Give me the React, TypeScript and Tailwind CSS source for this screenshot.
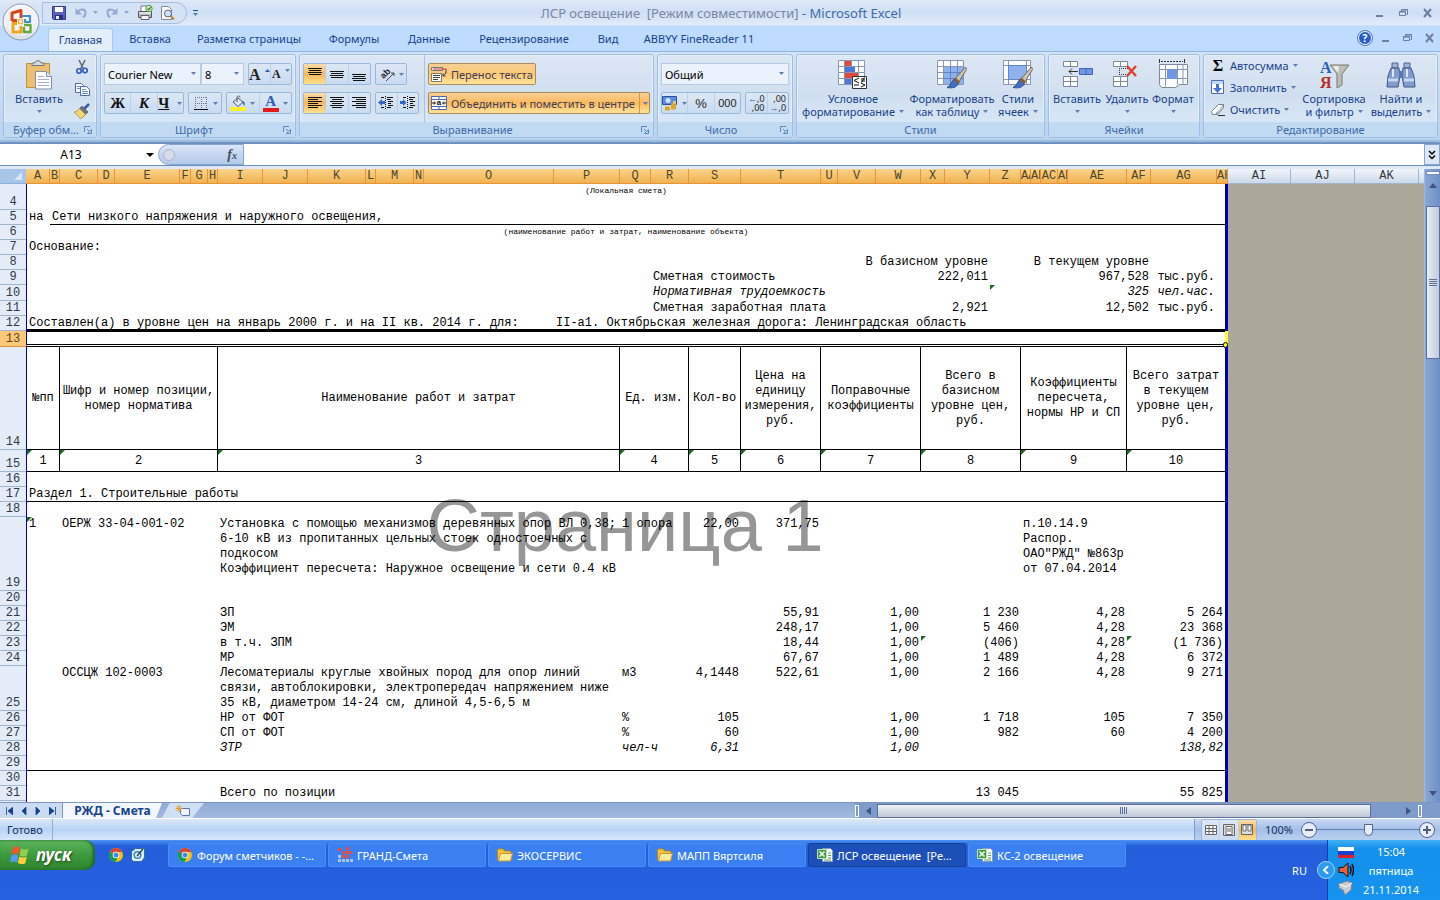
import React from "react";

type Cell = { from: string; to?: string; text?: string; cls?: string; mark?: boolean };
type Row = { n: number; h: string; cls?: string; active?: boolean; middle?: boolean; cells?: Cell[] };

const columns: [string, string][] = [
  ["A", "w-[24px]"], ["B", "w-[10px]"], ["C", "w-[38px]"], ["D", "w-[17px]"], ["E", "w-[65px]"],
  ["F", "w-[11px]"], ["G", "w-[17px]"], ["H", "w-[10px]"], ["I", "w-[45px]"], ["J", "w-[45px]"],
  ["K", "w-[58px]"], ["L", "w-[10px]"], ["M", "w-[38px]"], ["N", "w-[10px]"], ["O", "w-[130px]"],
  ["P", "w-[66px]"], ["Q", "w-[31px]"], ["R", "w-[38px]"], ["S", "w-[52px]"], ["T", "w-[80px]"],
  ["U", "w-[17px]"], ["V", "w-[38px]"], ["W", "w-[45px]"], ["X", "w-[24px]"], ["Y", "w-[45px]"],
  ["Z", "w-[31px]"], ["AA", "w-[10px]"], ["AB", "w-[10px]"], ["AC", "w-[17px]"], ["AD", "w-[10px]"],
  ["AE", "w-[59px]"], ["AF", "w-[24px]"], ["AG", "w-[66px]"], ["AH", "w-[11px]"],
  ["AI", "w-[63px]"], ["AJ", "w-[64px]"], ["AK", "w-[64px]"],
];
const LAST = 33;
const colIndex = (name: string) => columns.findIndex((c) => c[0] === name);

const lineBottom = "shadow-[inset_0_-1px_#000]";

const groups: [string, string][] = [
  ["A", "B"], ["C", "H"], ["I", "P"], ["Q", "R"], ["S", "S"],
  ["T", "T"], ["U", "W"], ["X", "Z"], ["AA", "AE"], ["AF", "AH"],
];
const headCell = (to: string) => `text-center shadow-[inset_0_-1px_#000] ${to === "AH" ? "" : "border-r border-r-black"}`;
const headings = [
  "№пп",
  "Шифр и номер позиции,\nномер норматива",
  "Наименование работ и затрат",
  "Ед. изм.",
  "Кол-во",
  "Цена на\nединицу\nизмерения,\nруб.",
  "Поправочные\nкоэффициенты",
  "Всего в\nбазисном\nуровне цен,\nруб.",
  "Коэффициенты\nпересчета,\nнормы НР и СП",
  "Всего затрат\nв текущем\nуровне цен,\nруб.",
];

// name, unit, quantity, price, factor, base total, index, current total
const costRow = (n: number, v: string[], extra: Partial<Row> = {}, code = "", marks = false): Row => ({
  n,
  h: "h-[15px]",
  ...extra,
  cells: [
    { from: "C", to: "H", text: code },
    { from: "I", to: "P", text: v[0] },
    { from: "Q", to: "R", text: v[1] },
    { from: "S", text: v[2], cls: "text-right" },
    { from: "T", text: v[3], cls: "text-right" },
    { from: "U", to: "W", text: v[4], cls: "text-right" },
    { from: "X", to: "Z", text: v[5], cls: "text-right", mark: marks },
    { from: "AA", to: "AE", text: v[6], cls: "text-right" },
    { from: "AF", to: "AH", text: v[7], cls: "text-right", mark: marks },
  ],
});

const rows: Row[] = [
  { n: 4, h: "h-[26px]", cells: [{ from: "A", to: "AH", text: "(Локальная смета)", cls: "text-center text-[8px] leading-[13px]" }] },
  {
    n: 5, h: "h-[15px]",
    cells: [{ from: "A", text: "на" }, { from: "B", to: "AH", text: "Сети низкого напряжения и наружного освещения,", cls: lineBottom }],
  },
  { n: 6, h: "h-[15px]", cells: [{ from: "A", to: "AH", text: "(наименование работ и затрат, наименование объекта)", cls: "text-center text-[8px] leading-[13px]" }] },
  { n: 7, h: "h-[15px]", cells: [{ from: "A", to: "H", text: "Основание:" }] },
  {
    n: 8, h: "h-[15px]",
    cells: [
      { from: "U", to: "Y", text: "В базисном уровне", cls: "text-right" },
      { from: "Z", to: "AF", text: "В текущем уровне", cls: "text-right" },
    ],
  },
  {
    n: 9, h: "h-[15px]",
    cells: [
      { from: "R", to: "V", text: "Сметная стоимость" },
      { from: "W", to: "Y", text: "222,011", cls: "text-right" },
      { from: "AC", to: "AF", text: "967,528", cls: "text-right" },
      { from: "AG", text: "тыс.руб.", cls: "text-right" },
    ],
  },
  {
    n: 10, h: "h-[16px]", cls: "italic",
    cells: [
      { from: "R", to: "V", text: "Нормативная трудоемкость" },
      { from: "Z", mark: true },
      { from: "AC", to: "AF", text: "325", cls: "text-right" },
      { from: "AG", text: "чел.час.", cls: "text-right" },
    ],
  },
  {
    n: 11, h: "h-[15px]",
    cells: [
      { from: "R", to: "V", text: "Сметная заработная плата" },
      { from: "W", to: "Y", text: "2,921", cls: "text-right" },
      { from: "AC", to: "AF", text: "12,502", cls: "text-right" },
      { from: "AG", text: "тыс.руб.", cls: "text-right" },
    ],
  },
  {
    n: 12, h: "h-[15px]", cls: "shadow-[inset_0_-2px_#000]",
    cells: [
      { from: "A", to: "O", text: "Составлен(а) в уровне цен на январь 2000 г. и на II кв. 2014 г. для:" },
      { from: "P", to: "AH", text: "II-а1. Октябрьская железная дорога: Ленинградская область" },
    ],
  },
  { n: 13, h: "h-[16px]", cls: "border-b-[3px] border-double border-b-black shadow-[inset_0_1px_#000]", active: true },
  { n: 14, h: "h-[103px]", middle: true, cells: groups.map(([from, to], i) => ({ from, to, text: headings[i], cls: headCell(to) })) },
  { n: 15, h: "h-[22px]", middle: true, cells: groups.map(([from, to], i) => ({ from, to, text: String(i + 1), cls: headCell(to), mark: true })) },
  { n: 16, h: "h-[15px]" },
  { n: 17, h: "h-[15px]", cls: lineBottom, cells: [{ from: "A", to: "O", text: "Раздел 1. Строительные работы" }] },
  { n: 18, h: "h-[15px]" },
  {
    n: 19, h: "h-[74px]",
    cells: [
      { from: "A", text: "1", mark: true },
      { from: "C", to: "H", text: "ОЕРЖ 33-04-001-02" },
      {
        from: "I", to: "P",
        text: "Установка с помощью механизмов деревянных опор ВЛ 0,38;\n6-10 кВ из пропитанных цельных стоек одностоечных с\nподкосом\nКоэффициент пересчета: Наружное освещение и сети 0.4 кВ",
      },
      { from: "Q", to: "R", text: "1 опора" },
      { from: "S", text: "22,00", cls: "text-right" },
      { from: "T", text: "371,75", cls: "text-right" },
      { from: "AA", to: "AE", text: "п.10.14.9\nРаспор.\nОАО\"РЖД\" №863р\nот 07.04.2014" },
    ],
  },
  { n: 20, h: "h-[15px]" },
  costRow(21, ["ЗП", "", "", "55,91", "1,00", "1 230", "4,28", "5 264"]),
  costRow(22, ["ЭМ", "", "", "248,17", "1,00", "5 460", "4,28", "23 368"]),
  costRow(23, ["в т.ч. ЗПМ", "", "", "18,44", "1,00", "(406)", "4,28", "(1 736)"], {}, "", true),
  costRow(24, ["МР", "", "", "67,67", "1,00", "1 489", "4,28", "6 372"]),
  costRow(
    25,
    [
      "Лесоматериалы круглые хвойных пород для опор линий\nсвязи, автоблокировки, электропередач напряжением ниже\n35 кВ, диаметром 14-24 см, длиной 4,5-6,5 м",
      "м3", "4,1448", "522,61", "1,00", "2 166", "4,28", "9 271",
    ],
    { h: "h-[45px]" },
    "ОССЦЖ 102-0003"
  ),
  costRow(26, ["НР от ФОТ", "%", "105", "", "1,00", "1 718", "105", "7 350"]),
  costRow(27, ["СП от ФОТ", "%", "60", "", "1,00", "982", "60", "4 200"]),
  costRow(28, ["ЗТР", "чел-ч", "6,31", "", "1,00", "", "", "138,82"], { cls: "italic" }),
  { n: 29, h: "h-[15px]", cls: lineBottom },
  { n: 30, h: "h-[15px]" },
  costRow(31, ["Всего по позиции", "", "", "", "", "13 045", "", "55 825"]),
  { n: 32, h: "h-[15px]" },
];

const SheetRow = ({ row }: { row: Row }) => {
  const cells: (Cell & { start: number; end: number })[] = [];
  let next = 0;
  (row.cells || []).forEach((c) => {
    const start = colIndex(c.from);
    const end = colIndex(c.to || c.from);
    if (start > next) cells.push({ from: "", start: next, end: start - 1 });
    cells.push({ ...c, start, end });
    next = end + 1;
  });
  if (next <= LAST) cells.push({ from: "", start: next, end: LAST });

  return (
    <tr className={row.h}>
      <th
        scope="row"
        className={`border-b p-0 text-center align-bottom font-normal leading-[14px] ${
          row.active ? "border-[#e8923c] bg-[#fbc877] text-[#5a4520]" : "border-[#9eb6ce] bg-[#e4ecf7] text-[#303844]"
        }`}
      >
        {row.n}
      </th>
      {cells.map((c) => (
        <td
          key={c.start}
          colSpan={c.end - c.start + 1}
          className={`relative whitespace-pre px-0.5 py-0 ${row.middle ? "align-middle" : "align-top"} ${row.cls || ""} ${c.cls || ""} ${
            c.start === 0 ? "border-l border-l-[#0000b8]" : ""
          } ${c.end === LAST ? "border-r-[3px] border-r-[#0000b8]" : ""}`}
        >
          {c.text}
          {c.mark && <span className="absolute left-0 top-0 h-[5px] w-[5px] bg-[#1c6b24] [clip-path:polygon(0_0,100%_0,0_100%)]" />}
          {row.active && (
            <>
              <span className="absolute -right-[3px] top-0 h-[13px] w-[3px] bg-[#ffff2e]" />
              <span className="absolute -right-[3px] top-[11px] h-[6px] w-[5px] rounded-full border border-black bg-[#ffff2e]" />
            </>
          )}
        </td>
      ))}
      <td colSpan={4} className="bg-[#aca899] p-0" />
    </tr>
  );
};

const Down = ({ className = "" }: { className?: string }) => (
  <svg viewBox="0 0 5 3" className={`h-[3px] w-[5px] shrink-0 ${className}`}>
    <path d="M0 0h5L2.5 3z" fill="#5d7fb0" />
  </svg>
);

/* ---------- icons ---------- */

const Svg = ({ s = 16, children }: { s?: number; children: React.ReactNode }) => (
  <svg viewBox={`0 0 ${s} ${s}`} width={s} height={s} className="shrink-0" fill="none">
    {children}
  </svg>
);

const OfficeLogo = () => (
  <svg viewBox="0 0 38 38" className="h-[38px] w-[38px]" fill="none">
    <defs>
      <radialGradient id="orb" cx=".5" cy=".4" r=".65">
        <stop offset="0" stopColor="#ffffff" />
        <stop offset=".7" stopColor="#eceff4" />
        <stop offset="1" stopColor="#a9b4c6" />
      </radialGradient>
    </defs>
    <circle cx="19" cy="19" r="18" fill="url(#orb)" stroke="#8b9ab4" />
    <circle cx="19" cy="19" r="16.5" stroke="#fff" strokeOpacity=".7" />
    <g strokeWidth="3" strokeLinejoin="round">
      <path d="M10 18v-8l9-2.500V15M10 17.500h5" stroke="#d9481c" />
      <path d="M21 14v-1h7v6h-5v-3" stroke="#3f8fd8" strokeWidth="2.200" />
      <path d="M15 20.500h-4V29h8v-6" stroke="#f0a51c" />
      <path d="M22 22h6.500v7H22v-5" stroke="#66a83a" strokeWidth="2.400" />
    </g>
    <path d="M16.500 16.500h4v4h-4z" stroke="#f2b64a" strokeWidth="1.500" />
  </svg>
);

const Save = () => (
  <Svg>
    <path d="M1.5 1.5h13v13h-12l-1-1z" fill="#5a5fc4" stroke="#33388f" />
    <path d="M4 2h8v5H4z" fill="#fff" />
    <path d="M4 10h8v4H4z" fill="#2b2f74" />
    <path d="M5 11h3v3H5z" fill="#e8eaff" />
  </Svg>
);
const Undo = ({ flip = false }: { flip?: boolean }) => (
  <svg viewBox="0 0 16 16" className={`h-4 w-4 shrink-0 ${flip ? "-scale-x-100" : ""}`} fill="none">
    <path d="M4.500 7C8 3 13 4 12.500 8.500c-.3 2-1.500 3-2.500 4" stroke="#93abd3" strokeWidth="2" />
    <path d="M2.500 3v6.500H9z" fill="#93abd3" />
  </svg>
);
const Printer = () => (
  <Svg>
    <path d="M4 1h7v6H4z" fill="#fff" stroke="#777" />
    <path d="M1.500 6.500h13v6h-13z" fill="#b4bac2" stroke="#555" />
    <path d="M2 7h12v2H2z" fill="#dfe3e7" />
    <path d="M4 10.500h8v4H4z" fill="#f4f4f4" stroke="#666" />
    <circle cx="12" cy="3.500" r="3.200" fill="#dff0d8" stroke="#4f9a42" />
    <path d="M10.500 3.500l1.200 1.300L14 2" stroke="#2f8a22" strokeWidth="1.300" />
  </Svg>
);
const Preview = () => (
  <Svg>
    <path d="M2.500 1.500h7l3 3v10h-10z" fill="#fff" stroke="#7a86a0" />
    <circle cx="9" cy="8.500" r="3.500" fill="#cfe6fa" stroke="#55606f" />
    <path d="M11.500 11l3.500 3.500" stroke="#b8863b" strokeWidth="2" />
  </Svg>
);
const Paste = () => (
  <svg viewBox="0 0 28 30" className="h-[30px] w-[28px]" fill="none">
    <path d="M1.500 3.500h23v24h-23z" fill="#ecc070" stroke="#c1913f" />
    <path d="M7 5.500V3h3c0-3 6-3 6 0h3v2.500z" fill="#d7dade" stroke="#70767e" />
    <path d="M10.500 11.500h11l5 5v12.500h-16z" fill="#fff" stroke="#7f8fae" />
    <path d="M21.500 11.500v5h5" fill="#dfe8f6" stroke="#7f8fae" />
    <path d="M13 16.500h6M13 19.500h11M13 22.500h11M13 25.500h11" stroke="#9db0d0" />
  </svg>
);
const Cut = () => (
  <Svg>
    <path d="M5 1l4.500 9M11 1L6.500 10" stroke="#58677f" strokeWidth="1.500" />
    <circle cx="5" cy="12" r="2.200" stroke="#2d5bb8" strokeWidth="1.600" />
    <circle cx="11" cy="11.500" r="2.200" stroke="#2d5bb8" strokeWidth="1.600" />
  </Svg>
);
const Copy = () => (
  <Svg>
    <path d="M1.500 2.500h6l2 2v7h-8z" fill="#fff" stroke="#4b6fae" />
    <path d="M3 5.500h4M3 7.500h5" stroke="#6f90cc" />
    <path d="M6.500 5.500h6l3 3v6h-9z" fill="#fff" stroke="#4b6fae" />
    <path d="M8 8.500h4M8 10.500h6M8 12.500h6" stroke="#6f90cc" />
  </Svg>
);
const Brush = () => (
  <Svg>
    <path d="M15 1l-5 5" stroke="#3b5a9a" strokeWidth="2.500" />
    <path d="M8 3l6 6-2.500 2.500-6-6z" fill="#6b7586" stroke="#4b5464" strokeWidth=".7" />
    <path d="M5.500 5.500l6 6c-1.500 2-4 3.500-5 4.500-1-2-3-4-6.500-7 1.500 0 4-1 5.500-3.500z" fill="#f0d777" stroke="#a88a2c" strokeWidth=".8" />
  </Svg>
);
const Borders = () => (
  <Svg>
    <path d="M2 2.500h12M2 8.500h12M2.500 2v12M8.500 2v12M13.500 2v12" stroke="#6b7687" strokeDasharray="1 1" />
    <path d="M1 14.500h14" stroke="#111" strokeWidth="1" />
  </Svg>
);
const Bucket = () => (
  <Svg>
    <path d="M3 7l5-4 5 4-5 4.500z" fill="#dfe6ee" stroke="#4c5c74" />
    <path d="M7 7V2.500c0-2 3-2 3 0" stroke="#4c5c74" />
    <path d="M13 6c2 1 2 3 1.500 5-1-1-2-3-2.500-4z" fill="#2f6fc8" />
    <path d="M0 12h16v4H0z" fill="#f7f02a" />
  </Svg>
);
const Lines = ({ kind }: { kind: string }) => {
  const map: Record<string, string> = {
    top: "M2 3.500h14M3 5.500h12M2 7.500h14M3 9.500h12",
    middle: "M2 6.500h14M3 8.500h12M2 10.500h14M3 12.500h12",
    bottom: "M2 9.500h14M3 11.500h12M2 13.500h14M3 15.500h12",
    left: "M2 3.500h14M2 5.500h10M2 7.500h14M2 9.500h10M2 11.500h14M2 13.500h10",
    center: "M2 3.500h14M4 5.500h10M2 7.500h14M4 9.500h10M2 11.500h14M4 13.500h10",
    right: "M2 3.500h14M6 5.500h10M2 7.500h14M6 9.500h10M2 11.500h14M6 13.500h10",
  };
  return (
    <Svg s={18}>
      <path d={map[kind]} stroke="#111" />
    </Svg>
  );
};
const Indent = ({ right = false }: { right?: boolean }) => (
  <Svg>
    <path d="M7.500 1v14" stroke="#111" strokeDasharray="1 1" />
    <path d="M3 2.500h3M9 2.500h6M9 4.500h4M10 6.500h5M10 8.500h3M10 10.500h5M3 12.500h3M9 12.500h4" stroke="#111" />
    <path d={right ? "M0 6h3V4l3.500 3.500L3 11V9H0z" : "M7 6H4V4L0 7.500 4 11V9h3z"} fill="#3568c0" />
  </Svg>
);
const WrapIcon = () => (
  <Svg>
    <path d="M.5 1.500h11v3H.5z" fill="#fff" stroke="#777" />
    <path d="M2 3h13" stroke="#c33" />
    <path d="M.5 7.500h10v8H.5z" fill="#fff" stroke="#777" />
    <path d="M2 9.500h7M2 11.500h7M2 13.500h5" stroke="#444" />
    <path d="M15 3v4l-3 3M12 7.500V10h2.500" stroke="#345" />
  </Svg>
);
const MergeIcon = () => (
  <Svg>
    <path d="M.5 1.500h15v13H.5zM.5 4.500h15M.5 11.500h15M8 1.500v3M8 11.500v3" fill="#fff" stroke="#4a69a8" />
    <path d="M1 8h3M3 6.500L4.500 8 3 9.500M15 8h-3M13 6.500L11.500 8 13 9.500" stroke="#111" />
    <text x="8" y="10" fontSize="8" fontWeight="bold" fill="#111" textAnchor="middle" fontFamily="Liberation Sans, sans-serif">a</text>
  </Svg>
);
const Money = () => (
  <Svg>
    <path d="M.5 1.500h14v8H.5z" fill="#5d8be0" stroke="#2b4f9a" />
    <ellipse cx="6" cy="5.500" rx="2.500" ry="2.500" fill="#cfe0fa" />
    <path d="M9 9.500h5M9 11.500h5M9 13.500h5M3 12.500h5M3 14.500h5" stroke="#d9a52c" strokeWidth="2" />
    <path d="M11 6h3v3h-3z" fill="#eac55e" />
  </Svg>
);
const grid = (
  <>
    <path d="M1.500 1.500h26v24h-26z" fill="#fff" stroke="#8796b3" />
    <path d="M1.500 7.500h26M1.500 13.500h26M1.500 19.500h26M7.500 1.500v24M14.500 1.500v24M21.500 1.500v24" stroke="#8796b3" />
  </>
);
const PaintBrush = () => (
  <>
    <path d="M29.500 8L19 20l3.500 3.500 8-13z" fill="#c9c4b6" stroke="#6d6a62" />
    <path d="M18 20l4.500 4.500c-2 4-6 5-11.500 4 4-2 4-5 7-8.500z" fill="#3f6fc4" stroke="#2d4f94" />
    <path d="M18.500 19.500l4.500 4.500" stroke="#8a5a2c" strokeWidth="3" />
  </>
);
const CondIcon = () => (
  <Svg s={32}>
    {grid}
    <path d="M8 2h6v5H8zM8 14h13v5H8z" fill="#e5483a" />
    <path d="M8 8h10v5H8zM8 20h6v5H8z" fill="#4a78d8" />
    <path d="M15.500 17.500h14v12h-14z" fill="#fff" stroke="#333" />
    <path d="M22 19l-5 2.500 5 2.500M17 26h5M24 20h4M24 22h4M27.500 18.500l-3 5M24 24l4 2-4 2" stroke="#111" />
  </Svg>
);
const TableIcon = () => (
  <Svg s={32}>
    {grid}
    <path d="M8 8h19v17H8z" fill="#8fb2ee" />
    <path d="M7.500 13.500h20M7.500 19.500h20M14.500 7.500v18M21.500 7.500v18" stroke="#5c83cc" />
    <PaintBrush />
  </Svg>
);
const StylesIcon = () => (
  <Svg s={32}>
    <path d="M1.500 1.500h27v24h-27zM1.500 6.500h27M1.500 20.500h27M6.500 1.500v24M24.500 1.500v24" fill="#fff" stroke="#8796b3" />
    <path d="M6.500 6.500h18v14h-18z" fill="#8fb2ee" stroke="#5c83cc" />
    <PaintBrush />
  </Svg>
);
const InsertIcon = () => (
  <Svg s={32}>
    <path d="M2.500 2.500h14v5h-14zM9.500 2.500v5M2.500 17.500h14v10h-14zM2.500 22.500h14M9.500 17.500v10" fill="#fff" stroke="#7c88a0" />
    <path d="M18.500 9.500h13v6h-13zM25 9.500v6" fill="#6f97e6" stroke="#3f66b4" />
    <path d="M8 12.500h9M11 9.500l-3 3 3 3" stroke="#333" />
  </Svg>
);
const DeleteIcon = () => (
  <Svg s={32}>
    <path d="M2.500 2.500h14v5h-14zM9.500 2.500v5M2.500 17.500h14v10h-14zM2.500 22.500h14M9.500 17.500v10" fill="#fff" stroke="#7c88a0" />
    <path d="M8 9.500h12M8 15.500h12M8.500 9v7" stroke="#333" strokeDasharray="1 1" />
    <path d="M16 7l9 10M25 7l-9 10" stroke="#e2402c" strokeWidth="2.500" />
  </Svg>
);
const FormatIcon = () => (
  <Svg s={32}>
    <path d="M2.500 5.500h28v20h-8l-4 3h-14l-2-3z" fill="#fff" stroke="#7c88a0" />
    <path d="M2.500 10.500h28M2.500 19.500h28M8.500 5.500v22M20.500 5.500v20M26 5.500v20" stroke="#8796b3" />
    <path d="M10 10h10v10H10z" fill="#6f97e6" />
    <path d="M2.500 0v4M27.500 0v4" stroke="#333" />
    <path d="M4 2.500h22" stroke="#333" strokeDasharray="2 1" />
  </Svg>
);
const SortIcon = () => (
  <Svg s={32}>
    <path d="M12 6h19l-7 9v11l-5 3V15z" fill="#bcbdb6" stroke="#77786f" />
    <path d="M15 7h6l-1 7z" fill="#eeeeea" />
    <text x="2" y="14" fontSize="16" fontWeight="bold" fill="#2f5fb4" fontFamily="Liberation Serif, serif">А</text>
    <text x="2" y="29" fontSize="16" fontWeight="bold" fill="#b52f2a" fontFamily="Liberation Serif, serif">Я</text>
  </Svg>
);
const FindIcon = () => (
  <Svg s={32}>
    <path d="M7 4h6v5H7zM19 4h6v5h-6z" fill="#9db4da" stroke="#4a6290" />
    <path d="M6 9h8l1 8-2 11H2l1-11zM18 9h8l3 8 1 11H19l-2-11z" fill="#7f9ccc" stroke="#3f5788" />
    <path d="M14 12h4v7h-4z" fill="#5a77ab" />
    <path d="M3 21h10M19 21h10" stroke="#c8d8f0" strokeWidth="3" />
    <path d="M8 10v8M22 10v8" stroke="#dbe6f6" strokeWidth="2" />
  </Svg>
);
const FillIcon = () => (
  <Svg>
    <path d="M1.500 1.500h12v13h-12z" fill="#fff" stroke="#4a6fb4" />
    <path d="M2 2h11v3H2z" fill="#c7d8f4" />
    <path d="M6 5h3v4h3l-4.500 5L3 9h3z" fill="#3f74d6" />
  </Svg>
);
const EraserIcon = () => (
  <Svg>
    <path d="M1.500 10.500l7-7h5l-6 8-2 2h-3z" fill="#fff" stroke="#777f8c" />
    <path d="M13.500 3.500v3l-6 7h-2l2-3" fill="#cdd3dc" stroke="#777f8c" />
    <path d="M8 14.500h7" stroke="#333" />
  </Svg>
);
const Chrome = () => (
  <Svg>
    <circle cx="8" cy="8" r="7" fill="#f4c20d" />
    <path d="M8 8L1.900 4.500A7 7 0 0 1 14.100 4.500L14 5H8z" fill="#db4437" />
    <path d="M8 8L1.900 4.500A7 7 0 0 0 7.500 15l2.500-5z" fill="#0f9d58" />
    <circle cx="8" cy="8" r="3.300" fill="#fff" />
    <circle cx="8" cy="8" r="2.500" fill="#4285f4" />
  </Svg>
);
const Desktop = () => (
  <Svg>
    <path d="M1.500 4.500l4-3h9v9l-3 4h-8l-2-2z" fill="#dff0fb" stroke="#2f6ea8" />
    <circle cx="7.500" cy="8" r="3.300" stroke="#2f88c8" strokeWidth="1.500" />
    <path d="M7 9l6-7" stroke="#345" strokeWidth="1.500" />
  </Svg>
);
const Grand = () => (
  <Svg>
    <path d="M1 8h3v3H1zM1 12h3v3H1zM5 12h3v3H5zM9 12h3v3H9zM13 12h3v3h-3z" fill="#a9c4ec" />
    <path d="M5 4h3v3H5zM9 4h3v3H9zM5 8h3v3H5zM9 8h3v3H9zM1 1h3v3H1zM9 0h3v3H9zM13 4h2v3h-2z" fill="#f04a34" />
  </Svg>
);
const Folder = () => (
  <Svg>
    <path d="M.5 3.500c0-1 .5-1.500 1.500-1.500h4l1.500 2h5c1 0 1.500.500 1.500 1.500v8H1.500l-1-1z" fill="#f2c53c" stroke="#b9861c" />
    <path d="M3.500 6.500h12l-2 7.500h-12z" fill="#fdec9c" stroke="#c9962a" />
  </Svg>
);
const ExcelDoc = () => (
  <Svg>
    <path d="M5.500 1.500h8l2 2v11h-10z" fill="#fff" stroke="#8b9bb0" />
    <path d="M11 6h3M11 8.500h3M11 11h3M7 13h7" stroke="#5da35a" />
    <path d="M.5 2.500h9v9h-9z" fill="#3f9a42" stroke="#bfe5bd" />
    <path d="M2.500 4.500l5 5M7.500 4.500l-5 5" stroke="#fff" strokeWidth="1.500" />
  </Svg>
);

const WinButtons = ({ className }: { className: string }) => (
  <div className={`flex items-center ${className}`}>
    <button aria-label="Свернуть" className="flex h-3 w-3 items-end p-0.5">
      <span className="h-0.5 w-[7px] bg-[#6b7f9f]" />
    </button>
    <button aria-label="Восстановить">
      <svg viewBox="0 0 12 12" className="h-3 w-3" fill="none" stroke="#6b7f9f">
        <path d="M3.500 4.500v-2h6v5h-1M3 3h7" />
        <path d="M1.500 4.500h6v4h-6zM1 5h7" />
      </svg>
    </button>
    <button aria-label="Закрыть">
      <svg viewBox="0 0 12 12" className="h-3 w-3" fill="none" stroke="#6b7f9f" strokeWidth="2">
        <path d="M2 2l7 8M9 2L2 10" />
      </svg>
    </button>
  </div>
);

/* ---------- ribbon ---------- */

const Group = ({ title, width, launcher, children }: { title: string; width: string; launcher?: boolean; children: React.ReactNode }) => (
  <section
    className={`flex h-[84px] shrink-0 flex-col overflow-hidden rounded-[3px] border border-[#9dbfe3] bg-linear-to-b from-[#dce7f4] via-[#d0dfef] to-[#dcebfa] shadow-[inset_0_0_0_1px_#e6f0fb] ${width}`}
  >
    <div className="flex flex-1">{children}</div>
    <div className="flex h-[15px] items-center bg-[#c1d9f1] px-1">
      <h2 className="flex-1 text-center text-[#3e6aaa]">{title}</h2>
      {launcher && (
        <button aria-label={title}>
          <svg viewBox="0 0 8 8" className="h-2 w-2" fill="none" stroke="#5f86ba">
            <path d="M.5 6V.5H6M3 3l3 3M7.500 3.500v4h-4z" />
          </svg>
        </button>
      )}
    </div>
  </section>
);

const Box = ({ children, className = "" }: { children: React.ReactNode; className?: string }) => (
  <div className={`flex h-[22px] items-stretch divide-x divide-[#bcd0e8] overflow-hidden rounded-[2px] border border-[#99b8dc] bg-linear-to-b from-[#dbe7f5] to-[#c9dcf1] ${className}`}>
    {children}
  </div>
);
const Btn = ({ children, label, className = "", on = false }: { children: React.ReactNode; label: string; className?: string; on?: boolean }) => (
  <button
    aria-label={label}
    className={`flex flex-1 items-center justify-center gap-1 ${on ? "bg-linear-to-b from-[#fbdda6] via-[#f9b757] to-[#fde08c]" : ""} ${className}`}
  >
    {children}
  </button>
);

const Combo = ({ label, value, className }: { label: string; value: string; className: string }) => (
  <div className={`relative flex h-[22px] items-center border border-[#b3cbe8] bg-[#eaf2fb] ${className}`}>
    <select aria-label={label} defaultValue={value} className="h-full w-full appearance-none bg-transparent px-[3px] text-black outline-none">
      <option>{value}</option>
    </select>
    <Down className="pointer-events-none absolute right-1 top-2" />
  </div>
);

const Big = ({ icon, lines, arrow = false, className = "" }: { icon: React.ReactNode; lines: string[]; arrow?: boolean; className?: string }) => (
  <button className={`flex flex-col items-center pt-[3px] leading-[13px] text-[#15428b] ${className}`}>
    <span className="flex h-[34px] items-center">{icon}</span>
    <span>{lines[0]}</span>
    <span className="flex h-[13px] items-center gap-1">
      {lines[1]}
      {arrow && <Down />}
    </span>
  </button>
);

const tabs: [string, string][] = [
  ["Главная", "w-[65px]"], ["Вставка", "w-[70px]"], ["Разметка страницы", "w-[128px]"], ["Формулы", "w-[82px]"],
  ["Данные", "w-[68px]"], ["Рецензирование", "w-[122px]"], ["Вид", "w-[46px]"], ["ABBYY FineReader 11", "w-[136px]"],
];

const Ribbon = () => (
  <div className="border-y border-[#8db2e3] border-b-[#6f97c4] bg-linear-to-b from-[#d5e3f4] to-[#b9d2ee]">
    <div className="flex h-[90px] gap-[3px] border-b-2 border-[#9dbbdf] px-[3px] pt-0.5">
      <Group title="Буфер обм..." width="w-[94px]" launcher>
        <Big className="w-[70px]" icon={<Paste />} lines={["Вставить", ""]} arrow />
        <div className="flex flex-col gap-1.5 pt-1">
          <button aria-label="Вырезать"><Cut /></button>
          <button aria-label="Копировать"><Copy /></button>
          <button aria-label="Формат по образцу"><Brush /></button>
        </div>
      </Group>

      <Group title="Шрифт" width="w-[196px]" launcher>
        <div className="flex flex-col gap-[7px] px-[3px] pt-2">
          <div className="flex">
            <Combo label="Шрифт" value="Courier New" className="w-[97px]" />
            <Combo label="Размер" value="8" className="w-[43px]" />
            <Box className="ml-1 w-[44px] text-[#222]">
              <Btn label="Увеличить размер" className="gap-0">
                <b className="font-['Liberation_Serif',serif] text-[16px]">A</b>
                <svg viewBox="0 0 5 3" className="mb-2 h-[3px] w-[5px]"><path d="M0 3h5L2.500 0z" fill="#2f5fb4" /></svg>
              </Btn>
              <Btn label="Уменьшить размер" className="gap-0">
                <b className="font-['Liberation_Serif',serif] text-[12px]">A</b>
                <Down className="mb-2" />
              </Btn>
            </Box>
          </div>
          <div className="flex gap-1 font-['Liberation_Serif',serif] text-[15px] font-bold text-[#111]">
            <Box className="w-[80px]">
              <Btn label="Полужирный">Ж</Btn>
              <Btn label="Курсив" className="italic">К</Btn>
              <Btn label="Подчеркнутый" className="w-3"><u>Ч</u><Down className="ml-1" /></Btn>
            </Box>
            <Box className="w-[34px]"><Btn label="Границы"><Borders /><Down /></Btn></Box>
            <Box className="w-[66px]">
              <Btn label="Цвет заливки"><Bucket /><Down /></Btn>
              <Btn label="Цвет текста">
                <span className="w-4 border-b-4 border-[#e01b1b] text-center leading-[13px] text-[#2f5fb4]">A</span>
                <Down />
              </Btn>
            </Box>
          </div>
        </div>
      </Group>

      <Group title="Выравнивание" width="w-[355px]" launcher>
        <div className="flex flex-col gap-[7px] px-[3px] pt-2">
          <div className="flex gap-1">
            <Box className="w-[68px]">
              <Btn label="По верхнему краю" on><Lines kind="top" /></Btn>
              <Btn label="По середине"><Lines kind="middle" /></Btn>
              <Btn label="По нижнему краю"><Lines kind="bottom" /></Btn>
            </Box>
            <Box className="w-[32px]">
              <Btn label="Ориентация">
                <Svg>
                  <text x="2" y="11" fontSize="9" fontWeight="bold" fill="#222" transform="rotate(-45 6 9)" fontFamily="Liberation Sans, sans-serif">ab</text>
                  <path d="M7 15l8-8M12 7h3v3" stroke="#444" />
                </Svg>
                <Down />
              </Btn>
            </Box>
          </div>
          <div className="flex gap-1">
            <Box className="w-[68px]">
              <Btn label="По левому краю" on><Lines kind="left" /></Btn>
              <Btn label="По центру"><Lines kind="center" /></Btn>
              <Btn label="По правому краю"><Lines kind="right" /></Btn>
            </Box>
            <Box className="w-[44px]">
              <Btn label="Уменьшить отступ"><Indent /></Btn>
              <Btn label="Увеличить отступ"><Indent right /></Btn>
            </Box>
          </div>
        </div>
        <div className="ml-0.5 flex flex-col gap-[7px] border-l border-[#a9c3e2] pl-[3px] pt-2">
          <button className="flex h-[22px] w-[108px] items-center gap-1 whitespace-nowrap rounded-[2px] border border-[#a98b5c] bg-linear-to-b from-[#f6cf94] via-[#fdc871] to-[#fee39a] px-0.5 text-[#3b3b5c]">
            <WrapIcon />
            Перенос текста
          </button>
          <button className="flex h-[22px] w-[222px] items-center gap-1 overflow-hidden whitespace-nowrap rounded-[2px] border border-[#a98b5c] bg-linear-to-b from-[#f6cf94] via-[#fdb95a] to-[#fee39a] pl-0.5 text-[#3b3b5c]">
            <MergeIcon />
            <span className="flex-1 text-left">Объединить и поместить в центре</span>
            <span className="flex h-full w-3 shrink-0 items-center justify-center border-l border-[#c79a52]"><Down /></span>
          </button>
        </div>
      </Group>

      <Group title="Число" width="w-[136px]" launcher>
        <div className="flex flex-col gap-[7px] px-[3px] pt-2">
          <Combo label="Числовой формат" value="Общий" className="w-[128px]" />
          <div className="flex gap-1 text-[#222]">
            <Box className="w-[80px]">
              <Btn label="Финансовый формат" className="w-3"><Money /><Down /></Btn>
              <Btn label="Процентный формат" className="font-['Liberation_Sans',sans-serif] text-[13px]">%</Btn>
              <Btn label="Формат с разделителями" className="font-['Liberation_Sans',sans-serif]">000</Btn>
            </Box>
            <Box className="w-[44px] text-[9px] leading-[9px]">
              <Btn label="Увеличить разрядность"><span className="text-right"><span className="text-[#2f5fb4]">←</span>,0<br />,00</span></Btn>
              <Btn label="Уменьшить разрядность"><span className="text-right">,00<br /><span className="text-[#2f5fb4]">→</span>,0</span></Btn>
            </Box>
          </div>
        </div>
      </Group>

      <Group title="Стили" width="w-[249px]">
        <Big className="w-[112px]" icon={<CondIcon />} lines={["Условное", "форматирование"]} arrow />
        <Big className="w-[86px]" icon={<TableIcon />} lines={["Форматировать", "как таблицу"]} arrow />
        <Big className="w-[46px]" icon={<StylesIcon />} lines={["Стили", "ячеек"]} arrow />
      </Group>

      <Group title="Ячейки" width="w-[152px]">
        <Big className="w-[56px]" icon={<InsertIcon />} lines={["Вставить", ""]} arrow />
        <Big className="w-[44px]" icon={<DeleteIcon />} lines={["Удалить", ""]} arrow />
        <Big className="w-[48px]" icon={<FormatIcon />} lines={["Формат", ""]} arrow />
      </Group>

      <Group title="Редактирование" width="w-[235px]">
        <div className="flex w-[96px] flex-col gap-1.5 pl-1.5 pt-0.5 text-[#15428b]">
          <button className="flex h-4 items-center gap-1">
            <b className="w-4 text-center font-['Liberation_Serif',serif] text-[16px] text-black">Σ</b>Автосумма<Down />
          </button>
          <button className="flex h-4 items-center gap-1"><FillIcon />Заполнить<Down /></button>
          <button className="flex h-4 items-center gap-1"><EraserIcon />Очистить<Down /></button>
        </div>
        <Big className="w-[68px]" icon={<SortIcon />} lines={["Сортировка", "и фильтр"]} arrow />
        <Big className="w-[66px]" icon={<FindIcon />} lines={["Найти и", "выделить"]} arrow />
      </Group>
    </div>
  </div>
);

const TitleBar = () => (
  <header className="relative">
    <div className="flex h-[26px] items-center border-b border-[#cfe0f5] bg-linear-to-b from-[#dfe9f6] via-[#cfdff5] to-[#e2ecf9]">
      <div className="ml-[42px] flex h-[22px] w-[145px] items-center rounded-r-full border border-[#a5bfdf] bg-[#d3e2f5] pl-2">
        <button aria-label="Сохранить"><Save /></button>
        <button aria-label="Отменить" className="ml-1.5 flex items-center gap-1"><Undo /><Down className="opacity-60" /></button>
        <button aria-label="Вернуть" className="ml-1.5 flex items-center gap-1"><Undo flip /><Down className="opacity-60" /></button>
        <button aria-label="Печать" className="ml-2"><Printer /></button>
        <button aria-label="Просмотр" className="ml-1.5"><Preview /></button>
      </div>
      <button aria-label="Настройка панели" className="ml-1.5 flex flex-col items-center gap-0.5">
        <span className="h-px w-[5px] bg-[#2f4f8a]" />
        <Down />
      </button>
      <h1 className="flex-1 whitespace-pre pr-[130px] pt-0.5 text-center text-[13px] text-[#3e6aaa]">
        <span className="text-[#7a879c]">ЛСР освещение  [Режим совместимости]</span> - Microsoft Excel
      </h1>
      <WinButtons className="mr-1.5 gap-3" />
    </div>
    <nav className="flex h-[25px] items-end bg-[#bfdbff] pl-12">
      {tabs.map(([name, w], i) => (
        <a
          key={name}
          href="#"
          className={`flex h-[23px] items-center justify-center whitespace-nowrap pb-0.5 text-[#15428b] ${w} ${
            i === 0 ? "rounded-t-[3px] border border-b-0 border-[#a9c9f0] bg-[#e3eefb]" : "pl-1"
          }`}
        >
          {name}
        </a>
      ))}
      <div className="mb-1.5 ml-auto mr-1 flex items-center gap-2">
        <button aria-label="Справка" className="flex h-3.5 w-3.5 items-center justify-center rounded-full border border-white bg-[#2a5fc8] text-[10px] font-bold text-white outline outline-[#4a76c4]">?</button>
        <WinButtons className="gap-2.5" />
      </div>
    </nav>
    <button aria-label="Office" className="absolute left-0.5 top-[3px]"><OfficeLogo /></button>
  </header>
);

const FormulaBar = () => (
  <div className="bg-[#dfe8f5] pb-[3px]">
    <div className="flex h-[23px] border-y border-[#6a8fc0] bg-white">
      <div className="flex w-[158px] items-center">
        <input aria-label="Поле имени" defaultValue="A13" className="w-[142px] text-center text-[12px] text-black outline-none" />
        <svg viewBox="0 0 8 4" className="ml-1 h-1 w-2"><path d="M0 0h8L4 4z" fill="#000" /></svg>
      </div>
      <div className="flex w-[86px] items-center justify-between rounded-l-full border border-[#86a6d2] bg-linear-to-b from-[#dbe7f7] via-[#c3d6ef] to-[#b4cbea] pl-1 pr-1.5">
        <span className="h-3 w-3 rounded-full border border-[#a9b8cf] bg-[#d5dce8]" />
        <button aria-label="Вставить функцию" className="font-['Liberation_Serif',serif] text-[14px] font-bold italic text-[#4d4d55]">
          f<span className="text-[10px]">x</span>
        </button>
      </div>
      <input aria-label="Строка формул" className="min-w-0 flex-1 px-1 outline-none" />
      <button aria-label="Развернуть" className="flex w-4 items-center justify-center border border-[#86a6d2] bg-[#dce8f7]">
        <svg viewBox="0 0 8 10" className="h-2.5 w-2" fill="none" stroke="#000" strokeWidth="1.500"><path d="M1 1l3 3 3-3M1 5.500l3 3 3-3" /></svg>
      </button>
    </div>
  </div>
);

const VerticalScroll = () => (
  <div className="flex w-4 flex-col items-center border-l border-[#9db8e0] bg-linear-to-r from-[#8aa6d6] to-[#6f8fc6]">
    <span className="mt-0.5 h-1 w-3.5 border border-[#6f8fc0] bg-white" />
    <svg viewBox="0 0 8 5" className="mb-[18px] mt-2 h-[5px] w-2"><path d="M0 5h8L4 0z" fill="#3d5580" /></svg>
    <div className="flex h-[153px] w-3.5 items-center justify-center border border-[#5d7099] bg-linear-to-r from-[#e8edf5] to-[#bfcbdf]">
      <span className="h-[7px] w-2 bg-[repeating-linear-gradient(#5d7099_0_1px,transparent_1px_2px)]" />
    </div>
    <svg viewBox="0 0 8 5" className="mb-1.5 mt-auto h-[5px] w-2"><path d="M0 0h8L4 5z" fill="#3d5580" /></svg>
  </div>
);

const Sheet = () => (
  <div className="flex min-h-0 flex-1">
    <div className="relative min-w-0 flex-1 overflow-hidden bg-white">
      <div aria-hidden className="absolute left-[24px] top-[315px] w-[1202px] text-center font-['Liberation_Sans',sans-serif] text-[74px] leading-[84px] text-[#969696]">
        Страница 1
      </div>
      <table className="relative w-full table-fixed border-separate border-spacing-0 font-['Liberation_Mono',monospace] text-[12px] leading-[15px] text-black">
        <colgroup>
          <col className="w-[26px]" />
          {columns.map(([name, w]) => (
            <col key={name} className={w} />
          ))}
          <col />
        </colgroup>
        <thead>
          <tr className="h-[15px]">
            <th className="border-b border-[#8fb0d8] bg-[#a9c4e9] p-0" aria-label="Выделить все">
              <span className="ml-auto mr-1 block h-2 w-2 bg-[#d9e6f7] [clip-path:polygon(100%_0,100%_100%,0_100%)]" />
            </th>
            {columns.map(([name], i) => (
              <th
                key={name}
                scope="col"
                className={`overflow-hidden border-b border-r p-0 text-center font-normal leading-[14px] ${
                  i <= LAST
                    ? "border-[#e8923c] bg-linear-to-b from-[#fbd28b] to-[#efb350] text-[#4c4528]"
                    : "border-[#9eb6ce] bg-linear-to-b from-[#f2f6fb] to-[#ccd9ea] text-[#303844]"
                }`}
              >
                {name}
              </th>
            ))}
            <th className="border-b border-[#9eb6ce] bg-linear-to-b from-[#f2f6fb] to-[#ccd9ea] p-0" />
          </tr>
        </thead>
        <tbody>
          {rows.map((r) => (
            <SheetRow key={r.n} row={r} />
          ))}
        </tbody>
      </table>
    </div>
    <VerticalScroll />
  </div>
);

const navIcons: [string, string][] = [
  ["Первый лист", "M1.500 0v8M8 0L3 4l5 4z"],
  ["Предыдущий лист", "M6 0L2 4l4 4z"],
  ["Следующий лист", "M2 0l4 4-4 4z"],
  ["Последний лист", "M6.500 0v8M0 0l5 4-5 4z"],
];

const SheetTabs = () => (
  <div className="flex h-4 border-t border-[#7d96c0] bg-linear-to-b from-[#8fabd8] to-[#a3bade]">
    <div className="flex w-[62px] items-center justify-around bg-[#c9dbf3] px-0.5">
      {navIcons.map(([label, d]) => (
        <button key={label} aria-label={label}>
          <svg viewBox="0 0 8 8" className="h-2 w-2" fill="#15428b" stroke="#15428b" strokeWidth=".8"><path d={d} /></svg>
        </button>
      ))}
    </div>
    <button className="w-[100px] whitespace-nowrap border-l border-[#7d96c0] bg-[#f2f7fd] text-[12px] font-bold leading-[15px] text-[#15428b] [clip-path:polygon(0_0,100%_0,94%_100%,0_100%)]">РЖД - Смета</button>
    <button aria-label="Вставить лист" className="flex w-[42px] items-center justify-center bg-[#cfdff4] [clip-path:polygon(18%_0,100%_0,72%_100%,0_100%)]">
      <svg viewBox="0 0 16 12" className="h-3 w-4" fill="none">
        <path d="M5.500 3.500h9v7h-7l-2-2z" fill="#eef4fb" stroke="#5a76a8" />
        <path d="M4 0v7M.5 3.500h7M1.500 1l5 5M6.500 1l-5 5" stroke="#e39a28" />
      </svg>
    </button>
    <div className="ml-auto flex w-[585px] items-center bg-[#7f9bcc]">
      <span className="h-3 w-1 border border-white bg-[#7f9bcc]" />
      <svg viewBox="0 0 5 8" className="ml-[7px] h-2 w-[5px]"><path d="M5 0v8L0 4z" fill="#3d5580" /></svg>
      <div className="ml-1.5 flex h-[14px] w-[494px] items-center justify-center border border-[#5d7099] bg-linear-to-b from-[#eef1f6] to-[#bfc9d9]">
        <span className="h-[7px] w-2 bg-[repeating-linear-gradient(90deg,#5d7099_0_1px,transparent_1px_2px)]" />
      </div>
      <svg viewBox="0 0 5 8" className="ml-auto h-2 w-[5px]"><path d="M0 0v8l5-4z" fill="#3d5580" /></svg>
      <span className="ml-[7px] mr-[18px] h-3 w-1 border border-white bg-[#7f9bcc]" />
    </div>
  </div>
);

const StatusBar = () => (
  <footer className="flex h-[22px] items-center border-t border-white bg-linear-to-b from-[#dbe8f9] via-[#b9d3f5] to-[#d9e7f9] text-[#15315f]">
    <span className="flex h-full w-[53px] items-center border-r border-[#8fb0dc] pl-[7px]">Готово</span>
    <div className="ml-auto flex h-full items-center border-l border-[#7f9fd0] bg-linear-to-b from-[#c9daf3] via-[#a3bfe8] to-[#b9d0f0] pl-1.5 pr-[5px]">
      <Box className="h-[18px] w-[56px]">
        <Btn label="Обычный"><Svg><path d="M2.500 3.500h11v9h-11zM2.500 6.500h11M2.500 9.500h11M6 3.500v9M10 3.500v9" fill="#fff" stroke="#666" /></Svg></Btn>
        <Btn label="Разметка страницы"><Svg><path d="M2.500 2.500h11v11h-11z" fill="#ddd" stroke="#666" /><path d="M5 4.500h6v8H5zM6 7h4M6 9h4" fill="#fff" stroke="#666" /></Svg></Btn>
        <Btn label="Страничный режим" on><Svg><path d="M2.500 2.500h11v10h-11z" fill="#ddd" stroke="#666" /><path d="M4 3h3v6H4zM9 3h3v6H9z" fill="#fff" stroke="#666" /></Svg></Btn>
      </Box>
      <button className="w-[44px] text-center">100%</button>
      <button aria-label="Уменьшить" className="flex h-4 w-4 items-center justify-center rounded-full border border-[#4f6690] bg-[#e6edf7]"><span className="h-0.5 w-2 bg-[#4f5f7c]" /></button>
      <input
        type="range"
        aria-label="Масштаб"
        className="h-4 w-[102px] appearance-none bg-[linear-gradient(#5d7fb5,#5d7fb5)] bg-[length:100%_1px] bg-center bg-no-repeat [&::-webkit-slider-thumb]:h-3 [&::-webkit-slider-thumb]:w-[9px] [&::-webkit-slider-thumb]:appearance-none [&::-webkit-slider-thumb]:rounded-b-full [&::-webkit-slider-thumb]:border [&::-webkit-slider-thumb]:border-[#4f6690] [&::-webkit-slider-thumb]:bg-[#e6edf7]"
      />
      <button aria-label="Увеличить" className="flex h-4 w-4 items-center justify-center rounded-full border border-[#4f6690] bg-[#e6edf7]">
        <svg viewBox="0 0 8 8" className="h-2 w-2" stroke="#4f5f7c" strokeWidth="2"><path d="M0 4h8M4 0v8" /></svg>
      </button>
    </div>
  </footer>
);

const tasks = [
  { title: "Форум сметчиков - -...", icon: <Chrome /> },
  { title: "ГРАНД-Смета", icon: <Grand /> },
  { title: "ЭКОСЕРВИС", icon: <Folder /> },
  { title: "МАПП Вяртсиля", icon: <Folder /> },
  { title: "ЛСР освещение  [Ре...", icon: <ExcelDoc />, active: true },
  { title: "КС-2 освещение", icon: <ExcelDoc /> },
];

const Taskbar = () => (
  <div className="flex h-[60px] items-start bg-linear-to-b from-[#4a93f4] from-0% via-[#245edb] via-10% to-[#2560df] text-white">
    <button className="flex h-[30px] w-[95px] items-center gap-1.5 rounded-r-[10px] bg-linear-to-b from-[#5eb45e] via-[#3c9a3c] to-[#2f8430] pl-2.5 shadow-[inset_-2px_0_3px_#1f5f20]">
      <svg viewBox="0 0 20 18" className="h-[18px] w-5">
        <path d="M3 1.500q3-2 7 0l-1.500 7q-3.500-2-7 0z" fill="#f0562c" />
        <path d="M11 2.500q3.500 2 7.500 0l-1.500 7q-4 2-7.500 0z" fill="#8fd04c" />
        <path d="M1.300 9.500q3.500-2 7 0l-1.300 7q-3.500-2-7 0z" fill="#4f9cf0" />
        <path d="M9.300 10.500q3.500 2 7.500 0l-1.500 7q-4 1.500-7.500-.5z" fill="#fbd03c" />
      </svg>
      <span className="text-[17px] font-bold italic leading-6 [text-shadow:1px_1px_2px_#1d4f1e]">пуск</span>
    </button>
    <div className="ml-[13px] flex h-[30px] w-[60px] items-center gap-1.5">
      <button aria-label="Chrome"><Chrome /></button>
      <button aria-label="Свернуть все окна"><Desktop /></button>
    </div>
    <div className="flex gap-0.5 pt-[3px]">
      {tasks.map((t) => (
        <button
          key={t.title}
          className={`flex h-6 w-[158px] items-center gap-1 whitespace-pre rounded-[2px] border pl-2 text-left ${
            t.active ? "border-[#173f94] bg-[#1c50b8]" : "border-[#4a8df5] bg-[#3a80f3]"
          }`}
        >
          {t.icon}
          {t.title}
        </button>
      ))}
    </div>
    <span className="ml-auto self-center pr-[10px]">RU</span>
    <button aria-label="Показать скрытые значки" className="relative z-10 -mr-2 flex h-[18px] w-[18px] items-center justify-center self-center rounded-full border border-[#9fd6ff] bg-[#2a9af0]">
      <svg viewBox="0 0 8 8" className="h-2 w-2" fill="none" stroke="#fff" strokeWidth="2"><path d="M6 0L2 4l4 4" /></svg>
    </button>
    <div className="flex h-full w-[113px] items-center border-l border-[#0c3fae] bg-linear-to-b from-[#3fb0f6] from-0% via-[#1290ea] via-15% to-[#1593ee] pl-2.5 pr-3">
      <div className="flex flex-col gap-0.5">
        <Svg><path d="M0 3h16v4H0z" fill="#fff" /><path d="M0 7h16v4H0z" fill="#1c3fd0" /><path d="M0 11h16v3H0z" fill="#e02020" /></Svg>
        <Svg><path d="M1 5.500h4l5-4.500v14l-5-4.500H1z" fill="#e8603a" stroke="#111" /><path d="M12 4q2 4 0 8M14 2q3 6 0 12" stroke="#111" strokeWidth="1.500" /></Svg>
        <Svg><path d="M1 4l8-3 5 2-1 7-6 5-2-5-4-2z" fill="#c8ccd0" stroke="#7d848c" /><path d="M1 4l7 3 6-4" stroke="#fff" /></Svg>
      </div>
      <div className="flex flex-1 flex-col items-center leading-[19px]">
        <span>15:04</span>
        <span>пятница</span>
        <span>21.11.2014</span>
      </div>
    </div>
  </div>
);

const App: React.FC = () => {
  return (
    <div className="flex h-screen min-w-[1024px] flex-col overflow-hidden bg-[#bfdbff] font-['Noto_Sans',sans-serif] text-[11px] leading-[15px]">
      <TitleBar />
      <Ribbon />
      <FormulaBar />
      <Sheet />
      <SheetTabs />
      <StatusBar />
      <Taskbar />
    </div>
  );
};

export default App;
